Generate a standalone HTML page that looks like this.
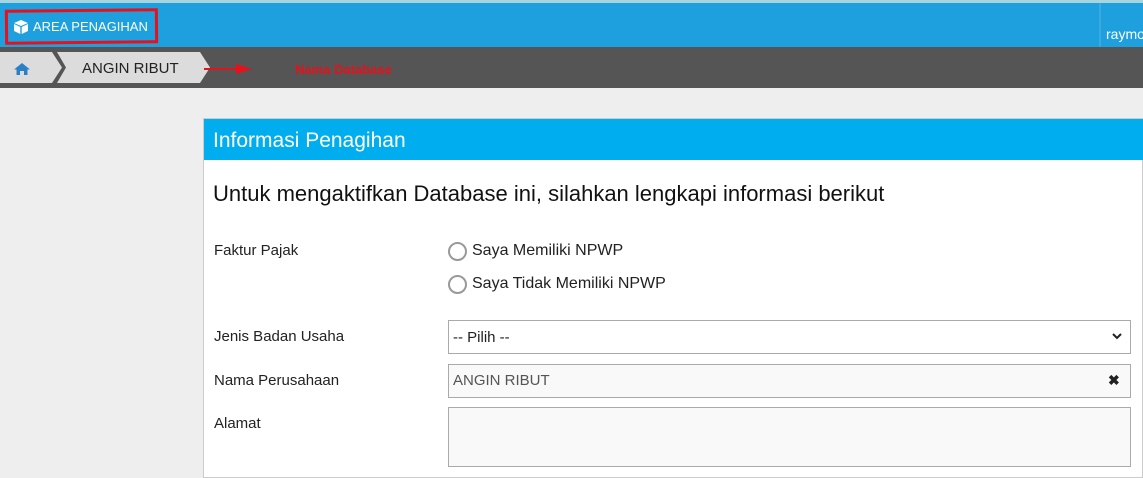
<!DOCTYPE html>
<html><head><style>
*{margin:0;padding:0;box-sizing:border-box}
body{width:1143px;height:454px;overflow:hidden;background:#eeeeee;font-family:"Liberation Sans",sans-serif;position:relative}
.abs{position:absolute;white-space:nowrap}
</style></head><body>
<div class="abs" style="left:0;top:0;width:1143px;height:3px;background:#a8d4de"></div>
<div class="abs" style="left:0;top:3px;width:1143px;height:44px;background:#1ea0df"></div>
<div class="abs" style="left:1099px;top:3px;width:2px;height:44px;background:#3aa9e0"></div>
<div class="abs" style="left:1106px;top:26px;color:#fff;font-size:14px">raymo</div>
<div class="abs" style="left:5px;top:9px;width:153px;height:35px;border:3px solid #e8101a;transform:rotate(-0.6deg)"></div>
<svg class="abs" style="left:13px;top:19px" width="16" height="16" viewBox="0 0 16 16"><path d="M8 1L15 4L8 7L1 4Z M1 5L7.3 8V15L1 12Z M15 5L8.7 8V15L15 12Z" fill="#fff"/></svg>
<div class="abs" style="left:33px;top:19px;color:#fff;font-size:13px">AREA PENAGIHAN</div>
<div class="abs" style="left:0;top:47px;width:1143px;height:41px;background:#555555"></div>
<svg class="abs" style="left:0;top:52px" width="215" height="31" viewBox="0 0 215 31">
<polygon points="0,0 52,0 62,15.5 52,31 0,31" fill="#dcdcdc"/>
<polygon points="57,0 200,0 210,15.5 200,31 57,31 66,15.5" fill="#dcdcdc"/>
<path d="M22 11L14 17.5H16.5V23H20V19H24V23H27.5V17.5H30Z" fill="#2b7fc7"/>
</svg>
<div class="abs" style="left:82px;top:60px;color:#222;font-size:15px">ANGIN RIBUT</div>
<div class="abs" style="left:204px;top:68px;width:36px;height:2px;background:#e8101a"></div>
<div class="abs" style="left:236px;top:64px;width:0;height:0;border-left:16px solid #e8101a;border-top:5px solid transparent;border-bottom:5px solid transparent"></div>
<div class="abs" style="left:295px;top:62px;color:#e8101a;font-size:13px;font-weight:bold">Nama Database</div>
<div class="abs" style="left:203px;top:118px;width:940px;height:360px;background:#fff;border:1px solid #ccc"></div>
<div class="abs" style="left:204px;top:119px;width:939px;height:41px;background:#00aeef"></div>
<div class="abs" style="left:213px;top:129px;color:#fff;font-size:21px">Informasi Penagihan</div>
<div class="abs" style="left:213px;top:181px;color:#111;font-size:22px">Untuk mengaktifkan Database ini, silahkan lengkapi informasi berikut</div>
<div class="abs" style="left:214px;top:242px;color:#222;font-size:15px">Faktur Pajak</div>
<div class="abs" style="left:448px;top:242px;width:19px;height:19px;border:2px solid #999;border-radius:50%"></div>
<div class="abs" style="left:472px;top:242px;color:#222;font-size:16px">Saya Memiliki NPWP</div>
<div class="abs" style="left:448px;top:275px;width:19px;height:19px;border:2px solid #999;border-radius:50%"></div>
<div class="abs" style="left:472px;top:275px;color:#222;font-size:16px">Saya Tidak Memiliki NPWP</div>
<div class="abs" style="left:214px;top:328px;color:#222;font-size:15px">Jenis Badan Usaha</div>
<div class="abs" style="left:448px;top:320px;width:683px;height:34px;border:1px solid #aaa;background:#fff"></div>
<div class="abs" style="left:453px;top:329px;color:#222;font-size:15px">-- Pilih --</div>
<svg class="abs" style="left:1112px;top:332px" width="10" height="8" viewBox="0 0 10 8"><path d="M1 2L5 6L9 2" stroke="#222" stroke-width="2" fill="none"/></svg>
<div class="abs" style="left:214px;top:372px;color:#222;font-size:15px">Nama Perusahaan</div>
<div class="abs" style="left:448px;top:364px;width:683px;height:34px;border:1px solid #aaa;background:#f9f9f9"></div>
<div class="abs" style="left:453px;top:372px;color:#555;font-size:15px">ANGIN RIBUT</div>
<div class="abs" style="left:1108px;top:372px;color:#222;font-size:14px;font-weight:bold">✖</div>
<div class="abs" style="left:214px;top:415px;color:#222;font-size:15px">Alamat</div>
<div class="abs" style="left:448px;top:407px;width:683px;height:60px;border:1px solid #aaa;background:#f9f9f9"></div>
</body></html>
